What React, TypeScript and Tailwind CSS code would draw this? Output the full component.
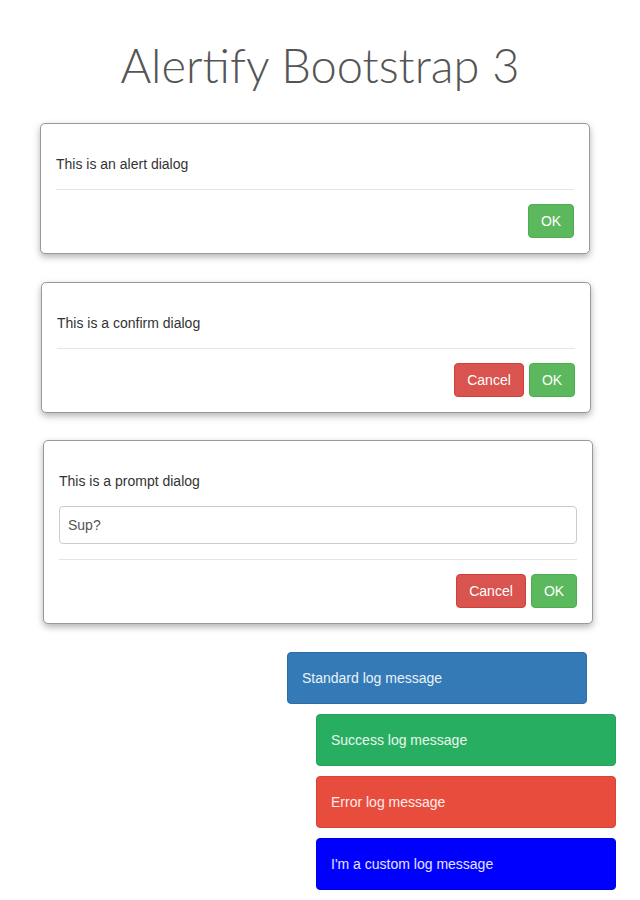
const logs = [
  { text: "Standard log message", cls: "ml-[287px] bg-[#337ab7] border-[#2e6da4]" },
  { text: "Success log message", cls: "ml-[316px] bg-[#27ae60] border-[#25a25a]" },
  { text: "Error log message", cls: "ml-[316px] bg-[#e74c3c] border-[#d44637]" },
  { text: "I'm a custom log message", cls: "ml-[316px] bg-[#0000ff] border-[#0000dd]" },
];

function Dialog({
  message,
  prompt,
  cancel,
  className,
}: {
  message: string;
  prompt?: boolean;
  cancel?: boolean;
  className: string;
}) {
  return (
    <div
      className={`w-[550px] rounded-[5px] border border-[#999] bg-white px-[15px] pt-[30px] pb-[15px] shadow-[0_3px_7px_rgba(0,0,0,0.3)] ${className}`}
    >
      <p className="text-[14px] leading-[20px] text-[#333]">{message}</p>
      {prompt && (
        <div className="mt-[15px] h-[38px] rounded-[4px] border border-[#ccc] px-[8px] text-[14px] leading-[36px] text-[#555]">
          Sup?
        </div>
      )}
      <div className="mt-[15px] border-t border-[#e5e5e5] pt-[14px] flex justify-end gap-[5px]">
        {cancel && (
          <button className="h-[34px] w-[70px] rounded-[4px] border border-[#d43f3a] bg-[#d9534f] text-[14px] text-white">
            Cancel
          </button>
        )}
        <button className="h-[34px] w-[46px] rounded-[4px] border border-[#4cae4c] bg-[#5cb85c] text-[14px] text-white">
          OK
        </button>
      </div>
    </div>
  );
}

export default function App() {
  return (
    <div className="min-h-[900px] w-[640px] bg-white font-['Liberation_Sans',Arial,sans-serif]">
      <h1 className="pt-[30px] text-center font-['Lato',sans-serif] text-[47px] font-light leading-[70px] text-[#555]">
        Alertify Bootstrap 3
      </h1>
      <div className="mt-[23px] flex flex-col">
        <Dialog message="This is an alert dialog" className="ml-[40px]" />
        <Dialog message="This is a confirm dialog" cancel className="ml-[41px] mt-[28px]" />
        <Dialog message="This is a prompt dialog" prompt cancel className="ml-[43px] mt-[27px]" />
      </div>
      <div className="mt-[28px] flex flex-col gap-[10px]">
        {logs.map((l) => (
          <div
            key={l.text}
            className={`h-[52px] w-[300px] rounded-[4px] border px-[14px] text-[14px] leading-[50px] text-white/90 ${l.cls}`}
          >
            {l.text}
          </div>
        ))}
      </div>
    </div>
  );
}
